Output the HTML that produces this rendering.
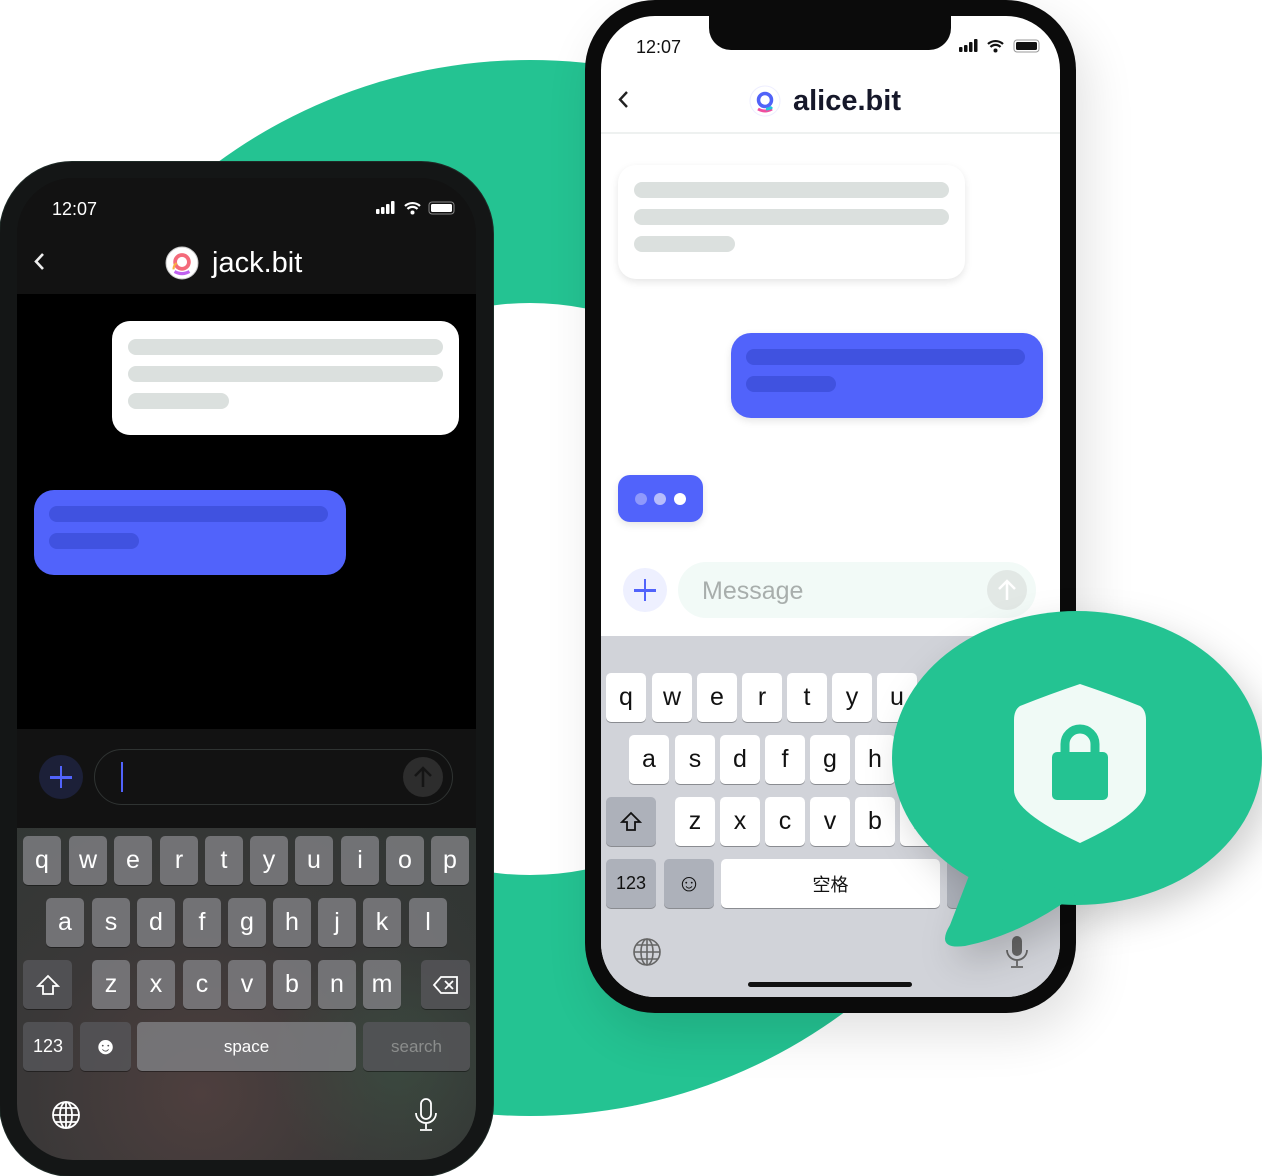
<!DOCTYPE html>
<html><head><meta charset="utf-8"><style>
*{margin:0;padding:0;box-sizing:border-box}
body{width:1262px;height:1176px;position:relative;overflow:hidden;background:#fff;font-family:"Liberation Sans","Noto Sans CJK SC",sans-serif}
.a{position:absolute}
.k{position:absolute;width:40px;height:49px;border-radius:5px;display:flex;align-items:center;justify-content:center;font-size:25px}
.lk{background:rgba(125,125,128,.85);color:#fff;box-shadow:0 1px 0 rgba(0,0,0,.4)}
.ld{background:rgba(85,85,88,.85);color:#fff;box-shadow:0 1px 0 rgba(0,0,0,.4)}
.rk{background:#fff;color:#111;box-shadow:0 1px 0 #8a8c91}
.rd{background:#adb1ba;color:#111;box-shadow:0 1px 0 #8a8c91}
.bar{position:absolute;border-radius:8px}
</style></head><body>
<div class="a" style="left:2px;top:60px;width:1056px;height:1056px;border-radius:50%;background:#24c392"></div>
<div class="a" style="left:244px;top:303px;width:572px;height:572px;border-radius:50%;background:#fff"></div>

<div class="a" style="left:585px;top:0;width:491px;height:1013px;border-radius:70px;background:#0b0b0b;box-shadow:10px 20px 50px rgba(0,0,0,.12)"></div>
<div class="a" style="left:601px;top:16px;width:459px;height:981px;border-radius:54px;background:#fff;overflow:hidden">
  <div class="a" style="left:108px;top:0;width:242px;height:34px;background:#0b0b0b;border-radius:0 0 22px 22px"></div>
  <div class="a" style="left:35px;top:21px;font-size:18px;color:#111">12:07</div>
  <svg class="a" style="left:358px;top:22px" width="84" height="16" viewBox="0 0 84 16"><rect x="0" y="9" width="3.5" height="5" rx="1" fill="#111"/><rect x="5" y="7" width="3.5" height="7" rx="1" fill="#111"/><rect x="10" y="4" width="3.5" height="10" rx="1" fill="#111"/><rect x="15" y="1" width="3.5" height="13" rx="1" fill="#111"/><path d="M29 6a11 11 0 0 1 15 0M31.5 9a7 7 0 0 1 10 0" stroke="#111" stroke-width="2.2" fill="none"/><circle cx="36.5" cy="12.5" r="2" fill="#111"/><rect x="55" y="2" width="25" height="12" rx="3" fill="none" stroke="#999" stroke-width="1"/><rect x="57" y="4" width="21" height="8" rx="1.5" fill="#111"/></svg>
  <svg class="a" style="left:16px;top:74px" width="14" height="20"><path d="M10 2L3 9.5 10 17" stroke="#222" stroke-width="2.4" fill="none"/></svg>
  <svg class="a" style="left:148px;top:69px" width="32" height="32" viewBox="0 0 32 32"><circle cx="16" cy="16" r="15" fill="#fff" stroke="#eef" /><circle cx="16" cy="15" r="6.5" stroke="#5163f8" stroke-width="3.5" fill="none"/><path d="M9 24q7 4 14 0" stroke="#f04ea0" stroke-width="3" fill="none"/><path d="M17 24q4 0 6-2" stroke="#23c6d8" stroke-width="3" fill="none"/></svg>
  <div class="a" style="left:192px;top:69px;font-size:29px;font-weight:bold;color:#16182a">alice.bit</div>
  <div class="a" style="left:0;top:116px;width:459px;height:2px;background:#eef1f0"></div>
  <div class="a" style="left:17px;top:149px;width:347px;height:114px;border-radius:18px;background:#fff;box-shadow:0 3px 8px rgba(0,0,0,.1)"></div>
  <div class="bar" style="left:33px;top:166px;width:315px;height:16px;background:#dbe0de"></div>
  <div class="bar" style="left:33px;top:193px;width:315px;height:16px;background:#dbe0de"></div>
  <div class="bar" style="left:33px;top:220px;width:101px;height:16px;background:#dbe0de"></div>
  <div class="a" style="left:130px;top:317px;width:312px;height:85px;border-radius:20px;background:#5163fb;box-shadow:0 3px 8px rgba(0,0,0,.1)"></div>
  <div class="bar" style="left:145px;top:333px;width:279px;height:16px;background:#4052e0"></div>
  <div class="bar" style="left:145px;top:360px;width:90px;height:16px;background:#4052e0"></div>
  <div class="a" style="left:17px;top:459px;width:85px;height:47px;border-radius:12px;background:#5163fb;box-shadow:0 3px 8px rgba(0,0,0,.1)"></div>
  <div class="a" style="left:34px;top:477px;width:12px;height:12px;border-radius:50%;background:#8f99fb"></div>
  <div class="a" style="left:53px;top:477px;width:12px;height:12px;border-radius:50%;background:#b7bdfb"></div>
  <div class="a" style="left:73px;top:477px;width:12px;height:12px;border-radius:50%;background:#fff"></div>
  <div class="a" style="left:22px;top:552px;width:44px;height:44px;border-radius:50%;background:#eef0ff"></div>
  <div class="a" style="left:33px;top:573px;width:22px;height:2.5px;background:#5163fb"></div>
  <div class="a" style="left:42.7px;top:563px;width:2.5px;height:22px;background:#5163fb"></div>
  <div class="a" style="left:77px;top:546px;width:358px;height:56px;border-radius:28px;background:#f2faf7"></div>
  <div class="a" style="left:101px;top:561px;font-size:25px;color:#a8aeac">Message</div>
  <div class="a" style="left:386px;top:554px;width:40px;height:40px;border-radius:50%;background:#e2e8e5"></div>
  <svg class="a" style="left:396px;top:562px" width="20" height="24"><path d="M10 22V3M2 11l8-8 8 8" stroke="#fff" stroke-width="2.5" fill="none"/></svg>
  <div class="a" style="left:0;top:620px;width:459px;height:361px;background:#d1d3d9"></div>
</div>
<div class="a" style="left:0;top:0;width:1262px;height:1176px">
  <div class="k rk" style="left:606px;top:673px">q</div><div class="k rk" style="left:652px;top:673px">w</div><div class="k rk" style="left:697px;top:673px">e</div><div class="k rk" style="left:742px;top:673px">r</div><div class="k rk" style="left:787px;top:673px">t</div><div class="k rk" style="left:832px;top:673px">y</div><div class="k rk" style="left:877px;top:673px">u</div>
  <div class="k rk" style="left:629px;top:735px">a</div><div class="k rk" style="left:675px;top:735px">s</div><div class="k rk" style="left:720px;top:735px">d</div><div class="k rk" style="left:765px;top:735px">f</div><div class="k rk" style="left:810px;top:735px">g</div><div class="k rk" style="left:855px;top:735px">h</div>
  <div class="k rd" style="left:606px;top:797px;width:50px"><svg width="22" height="22"><path d="M11 2L2 11h5v8h8v-8h5z" stroke="#111" stroke-width="1.8" fill="none"/></svg></div>
  <div class="k rk" style="left:675px;top:797px">z</div><div class="k rk" style="left:720px;top:797px">x</div><div class="k rk" style="left:765px;top:797px">c</div><div class="k rk" style="left:810px;top:797px">v</div><div class="k rk" style="left:855px;top:797px">b</div><div class="k rk" style="left:900px;top:797px">n</div>
  <div class="k rd" style="left:606px;top:859px;width:50px;font-size:18px">123</div>
  <div class="k rd" style="left:664px;top:859px;width:50px;font-size:24px">☺</div>
  <div class="k rk" style="left:721px;top:859px;width:219px;font-size:18px">空格</div>
  <div class="k rd" style="left:947px;top:859px;width:40px"></div>
  <svg class="a" style="left:632px;top:937px" width="30" height="30" viewBox="0 0 30 30"><g stroke="#666" stroke-width="1.6" fill="none"><circle cx="15" cy="15" r="13"/><ellipse cx="15" cy="15" rx="6" ry="13"/><path d="M15 2v26M2 15h26M4 8h22M4 22h22"/></g></svg>
  <svg class="a" style="left:1004px;top:934px" width="26" height="36"><rect x="8" y="2" width="10" height="20" rx="5" fill="#666"/><path d="M3 16a10 10 0 0 0 20 0M13 26v6M7 33h12" stroke="#666" stroke-width="1.8" fill="none"/></svg>
  <div class="a" style="left:748px;top:982px;width:164px;height:5px;border-radius:3px;background:#111"></div>
</div>

<svg class="a" style="left:880px;top:600px;filter:drop-shadow(10px 14px 18px rgba(0,0,0,.18))" width="382" height="360" viewBox="880 600 382 360">
  <ellipse cx="1077" cy="758" rx="185" ry="147" fill="#24c392"/>
  <path d="M975 860 L950 925 Q935 950 965 946 Q1020 935 1075 895 Z" fill="#24c392"/>
  <path d="M1080 684 Q1110 694 1140 706 Q1146 710 1146 720 L1146 790 Q1146 812 1080 843 Q1014 812 1014 790 L1014 720 Q1014 710 1020 706 Q1050 694 1080 684Z" fill="#f0faf6"/>
  <path d="M1065 753V744a15 15 0 0 1 30 0v9" stroke="#24c392" stroke-width="9" fill="none"/>
  <rect x="1052" y="752" width="56" height="48" rx="5" fill="#24c392"/>
</svg>

<div class="a" style="left:0;top:162px;width:493px;height:1014px;border-radius:72px;background:#141616;box-shadow:0 0 0 1px #1e2a26"></div>
<div class="a" style="left:17px;top:178px;width:459px;height:982px;border-radius:56px;background:#121212;overflow:hidden">
  <div class="a" style="left:35px;top:21px;font-size:18px;color:#fff">12:07</div>
  <svg class="a" style="left:359px;top:22px" width="84" height="16" viewBox="0 0 84 16"><rect x="0" y="9" width="3.5" height="5" rx="1" fill="#fff"/><rect x="5" y="7" width="3.5" height="7" rx="1" fill="#fff"/><rect x="10" y="4" width="3.5" height="10" rx="1" fill="#fff"/><rect x="15" y="1" width="3.5" height="13" rx="1" fill="#fff"/><path d="M29 6a11 11 0 0 1 15 0M31.5 9a7 7 0 0 1 10 0" stroke="#fff" stroke-width="2.2" fill="none"/><circle cx="36.5" cy="12.5" r="2" fill="#fff"/><rect x="53" y="2" width="25" height="12" rx="3" fill="none" stroke="#888" stroke-width="1"/><rect x="55" y="4" width="21" height="8" rx="1.5" fill="#fff"/></svg>
  <svg class="a" style="left:16px;top:74px" width="14" height="20"><path d="M10 2L3 9.5 10 17" stroke="#eee" stroke-width="2.6" fill="none"/></svg>
  <svg class="a" style="left:148px;top:68px" width="34" height="34" viewBox="0 0 32 32"><circle cx="16" cy="16" r="15" fill="#fff" stroke="#ccc"/><circle cx="16" cy="15" r="6.5" stroke="#f46a7a" stroke-width="3.5" fill="none"/><path d="M9 24q7 4 14 0" stroke="#c060f0" stroke-width="3" fill="none"/><path d="M8 22q0-4 3-6" stroke="#f9b040" stroke-width="2" fill="none"/></svg>
  <div class="a" style="left:195px;top:69px;font-size:29px;color:#fff">jack.bit</div>
  <div class="a" style="left:0;top:116px;width:459px;height:435px;background:#000"></div>
  <div class="a" style="left:95px;top:143px;width:347px;height:114px;border-radius:18px;background:#fff"></div>
  <div class="bar" style="left:111px;top:161px;width:315px;height:16px;background:#dbe0de"></div>
  <div class="bar" style="left:111px;top:188px;width:315px;height:16px;background:#dbe0de"></div>
  <div class="bar" style="left:111px;top:215px;width:101px;height:16px;background:#dbe0de"></div>
  <div class="a" style="left:17px;top:312px;width:312px;height:85px;border-radius:20px;background:#5163fb"></div>
  <div class="bar" style="left:32px;top:328px;width:279px;height:16px;background:#4052e0"></div>
  <div class="bar" style="left:32px;top:355px;width:90px;height:16px;background:#4052e0"></div>
  <div class="a" style="left:22px;top:577px;width:44px;height:44px;border-radius:50%;background:#1c2038"></div>
  <div class="a" style="left:33px;top:598px;width:22px;height:2.5px;background:#5163fb"></div>
  <div class="a" style="left:42.7px;top:588px;width:2.5px;height:22px;background:#5163fb"></div>
  <div class="a" style="left:77px;top:571px;width:359px;height:56px;border-radius:28px;border:1.5px solid #2f3332"></div>
  <div class="a" style="left:104px;top:584px;width:2px;height:30px;background:#5163fb"></div>
  <div class="a" style="left:386px;top:579px;width:40px;height:40px;border-radius:50%;background:#2d2d2d"></div>
  <svg class="a" style="left:396px;top:587px" width="20" height="24"><path d="M10 22V3M2 11l8-8 8 8" stroke="#151515" stroke-width="2.5" fill="none"/></svg>
  <div class="a" style="left:0;top:650px;width:459px;height:332px;background:radial-gradient(ellipse at 40% 80%,#4e3f3e 0%,#3a3838 45%,#2f3633 100%)"></div>
  <div class="a" style="left:250px;top:760px;width:260px;height:250px;background:radial-gradient(circle,rgba(60,90,70,.5),rgba(0,0,0,0) 70%)"></div>
</div>
<div class="a" style="left:0;top:0">
  <div class="k lk" style="left:23px;top:836px;width:38px">q</div><div class="k lk" style="left:69px;top:836px;width:38px">w</div><div class="k lk" style="left:114px;top:836px;width:38px">e</div><div class="k lk" style="left:160px;top:836px;width:38px">r</div><div class="k lk" style="left:205px;top:836px;width:38px">t</div><div class="k lk" style="left:250px;top:836px;width:38px">y</div><div class="k lk" style="left:295px;top:836px;width:38px">u</div><div class="k lk" style="left:341px;top:836px;width:38px">i</div><div class="k lk" style="left:386px;top:836px;width:38px">o</div><div class="k lk" style="left:431px;top:836px;width:38px">p</div>
  <div class="k lk" style="left:46px;top:898px;width:38px">a</div><div class="k lk" style="left:92px;top:898px;width:38px">s</div><div class="k lk" style="left:137px;top:898px;width:38px">d</div><div class="k lk" style="left:183px;top:898px;width:38px">f</div><div class="k lk" style="left:228px;top:898px;width:38px">g</div><div class="k lk" style="left:273px;top:898px;width:38px">h</div><div class="k lk" style="left:318px;top:898px;width:38px">j</div><div class="k lk" style="left:363px;top:898px;width:38px">k</div><div class="k lk" style="left:409px;top:898px;width:38px">l</div>
  <div class="k ld" style="left:23px;top:960px;width:49px"><svg width="24" height="22"><path d="M12 2L2 12h5v8h10v-8h5z" stroke="#fff" stroke-width="1.8" fill="none"/></svg></div>
  <div class="k lk" style="left:92px;top:960px;width:38px">z</div><div class="k lk" style="left:137px;top:960px;width:38px">x</div><div class="k lk" style="left:183px;top:960px;width:38px">c</div><div class="k lk" style="left:228px;top:960px;width:38px">v</div><div class="k lk" style="left:273px;top:960px;width:38px">b</div><div class="k lk" style="left:318px;top:960px;width:38px">n</div><div class="k lk" style="left:363px;top:960px;width:38px">m</div>
  <div class="k ld" style="left:421px;top:960px;width:49px"><svg width="28" height="20"><path d="M9 2h16v16H9L2 10z" stroke="#fff" stroke-width="1.8" fill="none"/><path d="M13 6l8 8M21 6l-8 8" stroke="#fff" stroke-width="1.8"/></svg></div>
  <div class="k ld" style="left:23px;top:1022px;width:50px;font-size:18px">123</div>
  <div class="k ld" style="left:80px;top:1022px;width:51px;font-size:24px">☻</div>
  <div class="k lk" style="left:137px;top:1022px;width:219px;font-size:17px">space</div>
  <div class="k ld" style="left:363px;top:1022px;width:107px;font-size:17px;color:#8b8d8c">search</div>
  <svg class="a" style="left:51px;top:1100px" width="30" height="30" viewBox="0 0 30 30"><g stroke="#fff" stroke-width="1.8" fill="none"><circle cx="15" cy="15" r="13"/><ellipse cx="15" cy="15" rx="6" ry="13"/><path d="M15 2v26M2 15h26M4 8h22M4 22h22"/></g></svg>
  <svg class="a" style="left:413px;top:1097px" width="26" height="36"><rect x="8" y="2" width="10" height="20" rx="5" fill="none" stroke="#fff" stroke-width="1.8"/><path d="M3 16a10 10 0 0 0 20 0M13 26v6M7 33h12" stroke="#fff" stroke-width="1.8" fill="none"/></svg>
</div>
</body></html>
